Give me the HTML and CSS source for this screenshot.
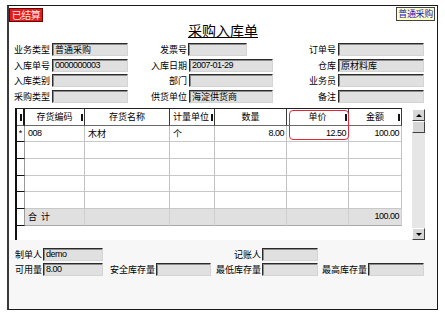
FILE: index.html
```html
<!DOCTYPE html>
<html>
<head>
<meta charset="utf-8">
<link rel="stylesheet" href="styles.css">
</head>
<body>
<div class="win">
  <div class="topbar">
    <span class="badge-done">已结算</span>
    <span class="badge-type">普通采购</span>
  </div>
  <div class="title"><span>采购入库单</span></div>

  <div class="form">
    <div class="lab">业务类型</div><div class="field">普通采购</div>
    <div class="lab">发票号</div><div class="field short"></div>
    <div class="lab">订单号</div><div class="field"></div>

    <div class="lab">入库单号</div><div class="field num">0000000003</div>
    <div class="lab">入库日期</div><div class="field num">2007-01-29</div>
    <div class="lab">仓库</div><div class="field">原材料库</div>

    <div class="lab">入库类别</div><div class="field"></div>
    <div class="lab">部门</div><div class="field"></div>
    <div class="lab">业务员</div><div class="field"></div>

    <div class="lab">采购类型</div><div class="field"></div>
    <div class="lab">供货单位</div><div class="field">海淀供货商</div>
    <div class="lab">备注</div><div class="field"></div>
  </div>

  <div class="gridwrap">
    <div class="table">
      <div class="row">
        <div class="h ind mk"></div>
        <div class="h mk">存货编码</div>
        <div class="h">存货名称</div>
        <div class="h left mk">计量单位</div>
        <div class="h">数量</div>
        <div class="h mk">单价</div>
        <div class="h mk">金额</div>
      </div>
      <div class="row">
        <div class="c ind">*</div>
        <div class="c num">008</div>
        <div class="c">木材</div>
        <div class="c">个</div>
        <div class="c num right">8.00</div>
        <div class="c num right">12.50</div>
        <div class="c num right">100.00</div>
      </div>
      <div class="row">
        <div class="c ind"></div><div class="c"></div><div class="c"></div><div class="c"></div><div class="c"></div><div class="c"></div><div class="c"></div>
      </div>
      <div class="row">
        <div class="c ind"></div><div class="c"></div><div class="c"></div><div class="c"></div><div class="c"></div><div class="c"></div><div class="c"></div>
      </div>
      <div class="row">
        <div class="c ind"></div><div class="c"></div><div class="c"></div><div class="c"></div><div class="c"></div><div class="c"></div><div class="c"></div>
      </div>
      <div class="row">
        <div class="c ind"></div><div class="c"></div><div class="c"></div><div class="c"></div><div class="c"></div><div class="c"></div><div class="c"></div>
      </div>
      <div class="row">
        <div class="c ind tind"></div>
        <div class="c tot">合&nbsp;&nbsp;计</div>
        <div class="c tot"></div>
        <div class="c tot"></div>
        <div class="c tot"></div>
        <div class="c tot"></div>
        <div class="c tot num right">100.00</div>
      </div>
      <div class="sel"></div>
    </div>
    <div class="scroll">
      <div class="sbtn"><span class="tri up"></span></div>
      <div class="thumb"></div>
      <div class="track"></div>
      <div class="sbtn"><span class="tri down"></span></div>
    </div>
  </div>

  <div class="bottom">
    <div class="lab">制单人</div><div class="field num">demo</div>
    <div class="lab c5">记账人</div><div class="field"></div>

    <div class="lab c1">可用量</div><div class="field num">8.00</div>
    <div class="lab">安全库存量</div><div class="field"></div>
    <div class="lab">最低库存量</div><div class="field"></div>
    <div class="lab">最高库存量</div><div class="field"></div>
  </div>
</div>
</body>
</html>
```

FILE: styles.css
```css
* { box-sizing: border-box; margin: 0; padding: 0; }

body {
  width: 445px;
  height: 317px;
  overflow: hidden;
  background: #ffffff;
  font-family: "Noto Sans CJK SC", sans-serif;
  font-size: 9px;
  color: #000;
}

.win {
  margin: 5px 0 0 7px;
  width: 431px;
  height: 305px;
  border: 1px solid #1a1a1a;
  border-left: 2px solid #3a3a3a;
  display: flex;
  flex-direction: column;
  background: #fff;
}

.topbar {
  display: flex;
  justify-content: space-between;
  align-items: flex-start;
  height: 16px;
  padding-right: 2px;
}

.badge-done {
  margin-top: 2px;
  width: 34px;
  height: 14px;
  background: #e31b1b;
  border: 1px solid #6a0000;
  color: #ffe4e4;
  font-size: 10px;
  line-height: 12px;
  text-align: center;
  letter-spacing: -0.5px;
}

.badge-type {
  margin-top: 1px;
  height: 14px;
  padding: 0 1px;
  background: #ffffc4;
  border: 1px solid #444;
  color: #1414c8;
  font-size: 9px;
  line-height: 12px;
  letter-spacing: -0.3px;
}

.title {
  height: 16px;
  text-align: center;
  font-size: 14px;
  line-height: 16px;
}

.title span {
  text-decoration: underline;
  text-underline-offset: 1px;
}

.form {
  margin-top: 5px;
  display: grid;
  grid-template-columns: 41px 76px 57px 84px 61px 86px;
  column-gap: 2px;
  row-gap: 2.5px;
  grid-auto-rows: 13px;
}

.lab {
  text-align: right;
  line-height: 13px;
  white-space: nowrap;
}

.field {
  background: #e0e0e0;
  border: 1px solid;
  border-color: #2a2a2a #d4d4d4 #d4d4d4 #2a2a2a;
  box-shadow: inset 1px 1px 0 #8c8c8c;
  line-height: 11px;
  padding-left: 2px;
  white-space: nowrap;
  overflow: hidden;
}

.field.short { width: 59px; margin-left: -1px; }

.num {
  font-family: "Liberation Sans", sans-serif;
  letter-spacing: -0.5px;
}

/* grid */
.gridwrap {
  margin: 5.5px 0 0 6px;
  height: 132px;
  display: flex;
  gap: 10px;
}

.table {
  position: relative;
  width: 387px;
  height: 132px;
  border-left: 2px solid #111;
  border-top: 1px solid #222;
  display: grid;
  grid-template-columns: 8px 60px 85px 45px 72px 62px 53px;
  grid-template-rows: 16.7px repeat(6, 16.67px);
  align-content: start;
}

.row { display: contents; }

.h {
  position: relative;
  background: #fff;
  border-right: 1px solid #3a3a3a;
  border-bottom: 1px solid #6a6a6a;
  text-align: center;
  line-height: 15px;
  white-space: nowrap;
}

.h.left { text-align: left; padding-left: 3px; }

.h.ind { border-right: 2px solid #1a1a1a; }

.h.mk::after {
  content: "";
  position: absolute;
  right: 1px;
  top: 5px;
  width: 2px;
  height: 7px;
  background: #111;
}

.c {
  border-right: 1px solid #c2c2c2;
  border-bottom: 1px solid #c8c8c8;
  line-height: 15px;
  padding: 0 3px;
  white-space: nowrap;
  overflow: hidden;
}

.c.right { text-align: right; padding-right: 2px; }

.c.ind {
  padding: 0;
  text-align: center;
  border-right: 1px solid #9a9a9a;
  border-bottom: 1px solid #111;
  font-family: "Liberation Sans", sans-serif;
}

.c.tot {
  background: #e0e0e0;
  border-right: 1px solid #cfcfcf;
  border-bottom: 1px solid #a8a8a8;
}

.sel {
  position: absolute;
  left: 272px;
  top: 1px;
  width: 60px;
  height: 30px;
  border: 1px solid #e0283a;
  border-radius: 4px;
  pointer-events: none;
}

.scroll {
  width: 13px;
  height: 131px;
  margin-top: 1px;
  display: flex;
  flex-direction: column;
  background: #e6e6e6;
}

.sbtn, .thumb {
  height: 12px;
  background: #d6d6d6;
  border: 1px solid;
  border-color: #ffffff #404040 #404040 #ffffff;
}

.sbtn {
  display: flex;
  align-items: center;
  justify-content: center;
}

.track { flex: 1; }

.tri {
  width: 0;
  height: 0;
  border-left: 3px solid transparent;
  border-right: 3px solid transparent;
}

.tri.up { border-bottom: 3px solid #000; }
.tri.down { border-top: 3px solid #000; }

/* bottom */
.bottom {
  flex: 1;
  background: #f7f7f7;
  padding: 8px 0 0 6px;
  display: grid;
  grid-template-columns: 27px 60px 51px 55px 49px 56px 48px 56px;
  column-gap: 1px;
  row-gap: 2px;
  grid-auto-rows: 13px;
  align-content: start;
}

.bottom .c5 { grid-column: 5; }
.bottom .c1 { grid-column: 1; }
```
